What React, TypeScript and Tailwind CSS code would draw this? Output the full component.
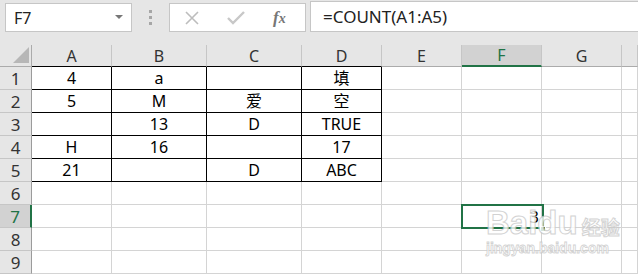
import { ReactNode } from 'react';

const cols = ['A', 'B', 'C', 'D', 'E', 'F', 'G', ''];
const widths = ['w-[80px]', 'w-[95px]', 'w-[95px]', 'w-[80px]', 'w-[80px]', 'w-[80px]', 'w-[80px]', 'w-[16px]'];

const data: string[][] = [
  ['4', 'a', '', '填'],
  ['5', 'M', '爱', '空'],
  ['', '13', 'D', 'TRUE'],
  ['H', '16', '', '17'],
  ['21', '', 'D', 'ABC'],
  [], [], [], [],
];

function Cell({ w, boxed, children }: { w: string; boxed: boolean; children?: ReactNode }) {
  return (
    <div
      className={`${w} h-[23px] shrink-0 flex items-end justify-center pb-[1px] bg-white border-r border-b ${boxed ? 'border-black' : 'border-[#d4d4d4]'} text-[16px] leading-[20px] text-black`}
    >
      {children}
    </div>
  );
}

function Toolbar() {
  return (
    <div className="h-[45px] flex items-start pt-[3px] pl-[5px]">
      <div className="w-[127px] h-[29px] bg-white border border-[#c6c6c6] flex items-center justify-between pl-[8px] pr-[8px]">
        <span className="text-[16px] text-[#222]">F7</span>
        <svg width="8" height="5" viewBox="0 0 8 5"><path d="M0 0h8L4 4z" fill="#777" /></svg>
      </div>
      <div className="w-[37px] h-[29px] flex flex-col items-center justify-center gap-[3px]">
        <div className="w-[3px] h-[3px] bg-[#a6a6a6]" />
        <div className="w-[3px] h-[3px] bg-[#a6a6a6]" />
        <div className="w-[3px] h-[3px] bg-[#a6a6a6]" />
      </div>
      <div className="w-[137px] h-[29px] bg-white border border-[#c6c6c6] flex items-center">
        <svg className="ml-[14px]" width="16" height="16" viewBox="0 0 16 16">
          <path d="M2 2l12 12M14 2L2 14" stroke="#bdbdbd" strokeWidth="1.6" fill="none" />
        </svg>
        <svg className="ml-[27px]" width="18" height="14" viewBox="0 0 18 14">
          <path d="M1 7l5 5L17 1" stroke="#c8c8c8" strokeWidth="2.4" fill="none" />
        </svg>
        <span className="ml-[28px] text-[17px] italic text-[#777] font-['Liberation_Serif',serif] font-bold leading-none">
          f<span className="text-[14px]">x</span>
        </span>
      </div>
      <div className="ml-[4px] -mt-[2px] flex-1 h-[31px] bg-white border border-[#c6c6c6] border-r-0 flex items-center pl-[12px]">
        <span className="text-[17px] text-[#222]">=COUNT(A1:A5)</span>
      </div>
    </div>
  );
}

function HeaderRow() {
  return (
    <div className="flex h-[22px]">
      <div className="w-[32px] shrink-0 border-r border-b border-[#ababab] relative">
        <svg className="absolute left-[13px] top-[2px]" width="16" height="16" viewBox="0 0 16 16">
          <path d="M16 0V16H0z" fill="#b7b7b7" />
        </svg>
      </div>
      {cols.map((c, i) => {
        const sel = c === 'F';
        const boxed = i < 4;
        return (
          <div
            key={i}
            className={`${widths[i]} shrink-0 flex items-end justify-center text-[16px] leading-[20px] border-r border-[#c6c6c6] ${sel ? 'bg-[#d2d2d2] text-[#217346] border-b-2 border-b-[#217346]' : boxed ? 'border-b border-b-black text-[#333]' : 'border-b border-b-[#ababab] text-[#333]'}`}
          >
            {c}
          </div>
        );
      })}
    </div>
  );
}

function Watermark() {
  return (
    <div className="absolute left-[486px] top-[206px] pointer-events-none select-none opacity-80">
      <div className="flex items-end">
        <span className="text-[33px] font-bold leading-[34px] text-white [-webkit-text-stroke:1px_#c8c8c8] font-['Liberation_Sans',sans-serif]">Bai</span>
        <span className="relative text-[33px] font-bold leading-[34px] text-white [-webkit-text-stroke:1px_#c8c8c8] font-['Liberation_Sans',sans-serif]">
          du
        </span>
        <span className="ml-[4px] mb-[3px] text-[19px] font-bold leading-[20px] text-white [-webkit-text-stroke:1px_#c8c8c8] font-['Noto_Sans_CJK_SC',sans-serif]">经验</span>
      </div>
      <div className="mt-[1px] text-[14px] leading-[14px] font-bold text-white [-webkit-text-stroke:0.8px_#c8c8c8] font-['Liberation_Sans',sans-serif]">
        jingyan.baidu.com
      </div>
    </div>
  );
}

export default function App() {
  return (
    <div className="relative w-[638px] h-[274px] overflow-hidden bg-[#e6e6e6] font-['Noto_Sans','Noto_Sans_CJK_SC',sans-serif]">
      <Toolbar />
      <HeaderRow />
      {data.map((row, r) => {
        const sel = r === 6;
        return (
          <div key={r} className="flex">
            <div
              className={`w-[32px] h-[23px] shrink-0 flex items-end justify-center text-[17px] leading-[21px] border-b border-[#c6c6c6] ${sel ? 'bg-[#d2d2d2] text-[#217346] border-r-2 border-r-[#217346]' : 'text-[#333] border-r border-r-[#9b9b9b]'}`}
            >
              {r + 1}
            </div>
            {widths.map((w, c) => (
              <Cell key={c} w={w} boxed={r < 5 && c < 4}>
                {row[c]}
              </Cell>
            ))}
          </div>
        );
      })}
      <div className="absolute left-[461px] top-[204px] w-[83px] h-[25px] border-2 border-[#217346] flex items-end justify-end pr-[3px] text-[16px] leading-[20px] text-black">
        3
      </div>
      <div className="absolute left-[540px] top-[226px] w-[6px] h-[6px] bg-[#217346] border border-white" />
      <Watermark />
    </div>
  );
}
